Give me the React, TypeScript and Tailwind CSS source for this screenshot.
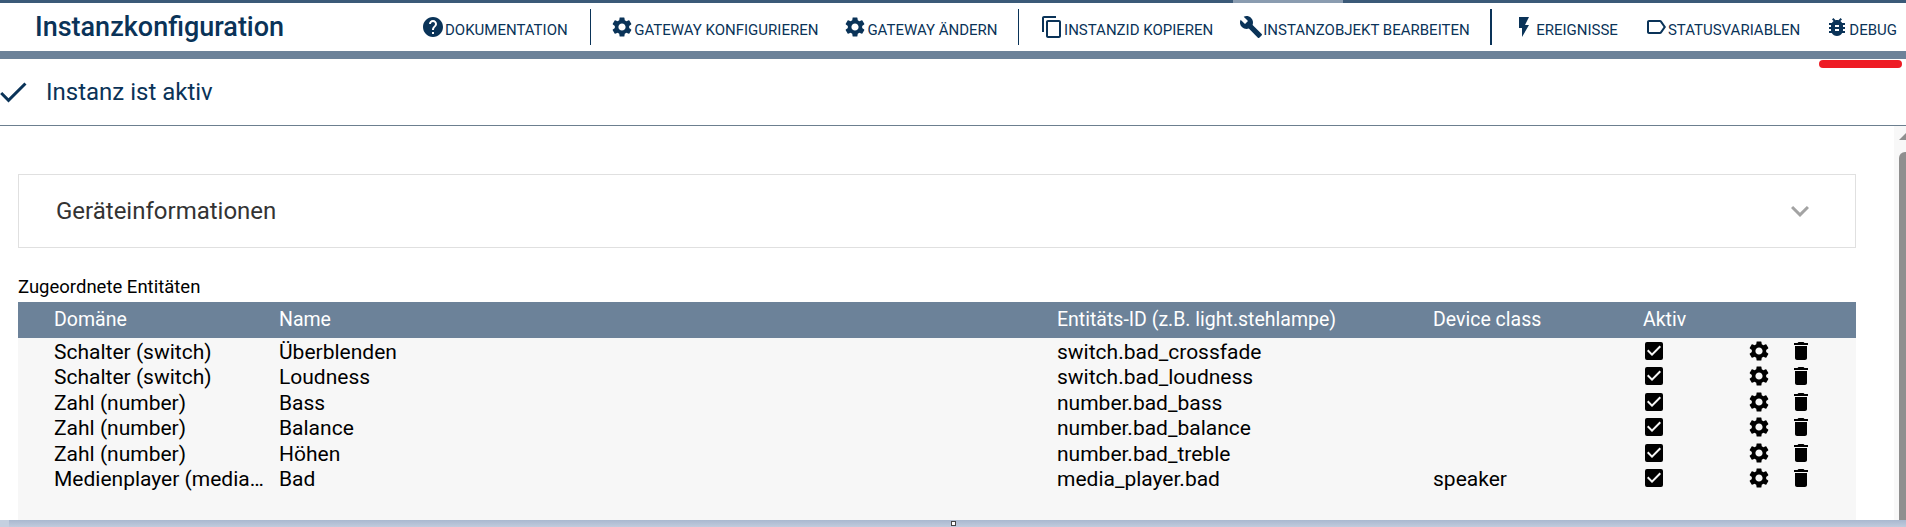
import {
  MdBugReport,
  MdBuild,
  MdCheck,
  MdCheckBox,
  MdContentCopy,
  MdDelete,
  MdExpandMore,
  MdFlashOn,
  MdHelp,
  MdOutlineLabel,
  MdSettings,
} from 'react-icons/md';
import type { ReactNode } from 'react';

function NavItem({ icon, label, className }: { icon: ReactNode; label: string; className?: string }) {
  return (
    <div className={`flex shrink-0 items-center ${className ?? ''}`}>
      <span className="flex h-[24px] w-[24px] items-center justify-center text-[24px]">{icon}</span>
      <span className="mt-[7px] text-[15px] whitespace-nowrap">{label}</span>
    </div>
  );
}

function Divider({ className }: { className: string }) {
  return <div className={`h-[36px] shrink-0 bg-[#0a3358] ${className}`} />;
}

const rows = [
  { domain: 'Schalter (switch)', name: 'Überblenden', id: 'switch.bad_crossfade', cls: '' },
  { domain: 'Schalter (switch)', name: 'Loudness', id: 'switch.bad_loudness', cls: '' },
  { domain: 'Zahl (number)', name: 'Bass', id: 'number.bad_bass', cls: '' },
  { domain: 'Zahl (number)', name: 'Balance', id: 'number.bad_balance', cls: '' },
  { domain: 'Zahl (number)', name: 'Höhen', id: 'number.bad_treble', cls: '' },
  { domain: 'Medienplayer (media_player)', name: 'Bad', id: 'media_player.bad', cls: 'speaker' },
];

export default function App() {
  return (
    <div className="flex h-[527px] w-[1906px] flex-col overflow-hidden bg-white font-['Roboto',sans-serif] text-[#0a3358]">
      {/* top accent */}
      <div className="flex h-[3px] shrink-0 bg-[#3b5a78]">
        <div className="w-[1233px]" />
        <div className="w-[110px] bg-[#8a9cb0]" />
      </div>

      {/* title bar */}
      <header className="flex h-[48px] shrink-0 items-center">
        <h1 className="ml-[35px] w-[386px] shrink-0 text-[27px] font-medium">Instanzkonfiguration</h1>
        <NavItem icon={<MdHelp />} label="DOKUMENTATION" />
        <Divider className="ml-[22px] w-[1px]" />
        <NavItem className="ml-[19.500px]" icon={<MdSettings />} label="GATEWAY KONFIGURIEREN" />
        <NavItem className="ml-[25px]" icon={<MdSettings />} label="GATEWAY ÄNDERN" />
        <Divider className="ml-[20px] w-[1.500px]" />
        <NavItem className="ml-[21px]" icon={<MdContentCopy />} label="INSTANZID KOPIEREN" />
        <NavItem className="ml-[26px]" icon={<MdBuild />} label="INSTANZOBJEKT BEARBEITEN" />
        <Divider className="ml-[20px] w-[2px]" />
        <NavItem className="ml-[20.500px]" icon={<MdFlashOn />} label="EREIGNISSE" />
        <NavItem className="ml-[26px]" icon={<MdOutlineLabel />} label="STATUSVARIABLEN" />
        <NavItem className="ml-[25px]" icon={<MdBugReport />} label="DEBUG" />
      </header>

      <div className="h-[8px] shrink-0 bg-[#6c8299]" />

      {/* status */}
      <div className="relative flex h-[67px] shrink-0 items-center border-b border-[#6c7f8f]">
        <MdCheck className="ml-[-5px] text-[36px]" />
        <span className="ml-[15px] text-[24px]">Instanz ist aktiv</span>
        <div className="absolute top-[1px] right-[4px] h-[8px] w-[83px] rounded-full bg-[#ee1c25]" />
      </div>

      {/* content */}
      <div className="flex min-h-0 flex-1">
        <main className="w-[1894px] pt-[48px] pl-[18px]">
          <section className="flex h-[74px] w-[1838px] items-center justify-between border border-[#e0e0e0] pr-[37px] pl-[37px] text-[#333]">
            <span className="text-[24px]">Geräteinformationen</span>
            <MdExpandMore className="text-[36px] text-[#a3a3a3]" />
          </section>
          <p className="mt-[27px] mb-[3px] h-[24px] text-[18.500px] leading-[24px] text-black">Zugeordnete Entitäten</p>
          <div className="w-[1838px] bg-[#f7f7f7] text-black">
            <div className="flex h-[36px] items-center bg-[#6c8299] text-[19.500px] text-white">
              <span className="ml-[36px] w-[225px]">Domäne</span>
              <span className="w-[778px]">Name</span>
              <span className="w-[376px]">Entitäts-ID (z.B. light.stehlampe)</span>
              <span className="w-[210px]">Device class</span>
              <span>Aktiv</span>
            </div>
            <div className="h-[182px]">
              {rows.map((r) => (
                <div key={r.id} className="flex h-[25.500px] items-center text-[21px]">
                  <span className="mt-[3px] ml-[36px] w-[225px] truncate pr-[14px]">{r.domain}</span>
                  <span className="mt-[3px] w-[778px]">{r.name}</span>
                  <span className="mt-[3px] w-[376px]">{r.id}</span>
                  <span className="mt-[3px] w-[209px]">{r.cls}</span>
                  <span className="w-[105px] text-[24px]"><MdCheckBox /></span>
                  <MdSettings className="shrink-0 text-[24px]" />
                  <MdDelete className="ml-[18px] shrink-0 text-[24px]" />
                </div>
              ))}
            </div>
          </div>
        </main>

        {/* scrollbar */}
        <div className="flex w-[12px] flex-col bg-[#f8f8f8] pl-[5px]">
          <div className="mt-[6px] h-0 w-0 border-b-[8px] border-l-[8px] border-b-[#8f8f8f] border-l-transparent" />
          <div className="mt-[12px] flex-1 rounded-tl-[6px] bg-[#8f8f8f]" />
        </div>
      </div>

      {/* window edge */}
      <div className="relative flex h-[7px] shrink-0 bg-gradient-to-b from-[#a9b8cf] to-[#c0cbdd]">
        <div className="h-full w-[9px] bg-[#c5d0e0]" />
        <div className="absolute top-[1px] left-[951px] h-[5px] w-[5px] border border-[#444] bg-white" />
      </div>
    </div>
  );
}
